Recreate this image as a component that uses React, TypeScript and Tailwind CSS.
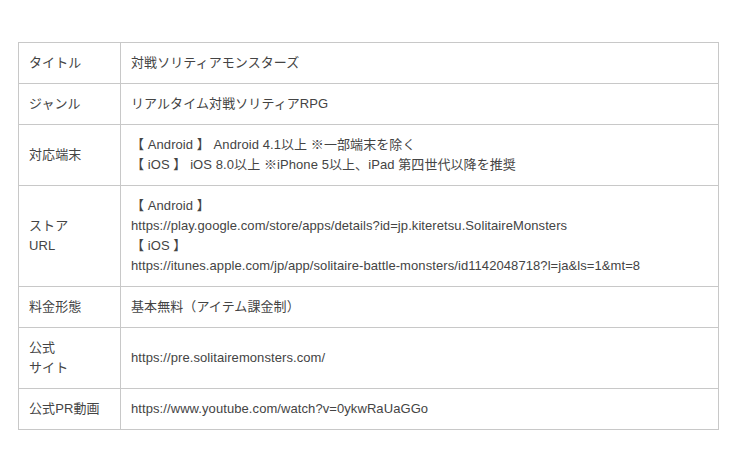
import React from 'react';

const rows: { label: string[]; value: string[] }[] = [
  { label: ['タイトル'], value: ['対戦ソリティアモンスターズ'] },
  { label: ['ジャンル'], value: ['リアルタイム対戦ソリティアRPG'] },
  {
    label: ['対応端末'],
    value: ['【 Android 】 Android 4.1以上 ※一部端末を除く', '【 iOS 】 iOS 8.0以上 ※iPhone 5以上、iPad 第四世代以降を推奨'],
  },
  {
    label: ['ストア', 'URL'],
    value: [
      '【 Android 】',
      'https://play.google.com/store/apps/details?id=jp.kiteretsu.SolitaireMonsters',
      '【 iOS 】',
      'https://itunes.apple.com/jp/app/solitaire-battle-monsters/id1142048718?l=ja&ls=1&mt=8',
    ],
  },
  { label: ['料金形態'], value: ['基本無料（アイテム課金制）'] },
  { label: ['公式', 'サイト'], value: ['https://pre.solitairemonsters.com/'] },
  { label: ['公式PR動画'], value: ['https://www.youtube.com/watch?v=0ykwRaUaGGo'] },
];

const App: React.FC = () => {
  return (
    <div className="min-h-[470px] bg-white pt-[42px] pl-[18px] font-['Liberation_Sans','Noto_Sans_CJK_JP',sans-serif] text-[13px] leading-[20px] tracking-[0.08px] text-[#444]">
      <table className="w-[701px] border-collapse">
        <tbody>
          {rows.map((row, i) => (
            <tr key={i}>
              <td className="w-[102px] border border-[#c8c8c8] px-[10px] py-[10px] align-middle">
                {row.label.map((l, j) => (
                  <div key={j}>{l}</div>
                ))}
              </td>
              <td className="border border-[#c8c8c8] px-[10px] py-[10px] align-middle">
                {row.value.map((v, j) => (
                  <div key={j}>{v}</div>
                ))}
              </td>
            </tr>
          ))}
        </tbody>
      </table>
    </div>
  );
};

export default App;
